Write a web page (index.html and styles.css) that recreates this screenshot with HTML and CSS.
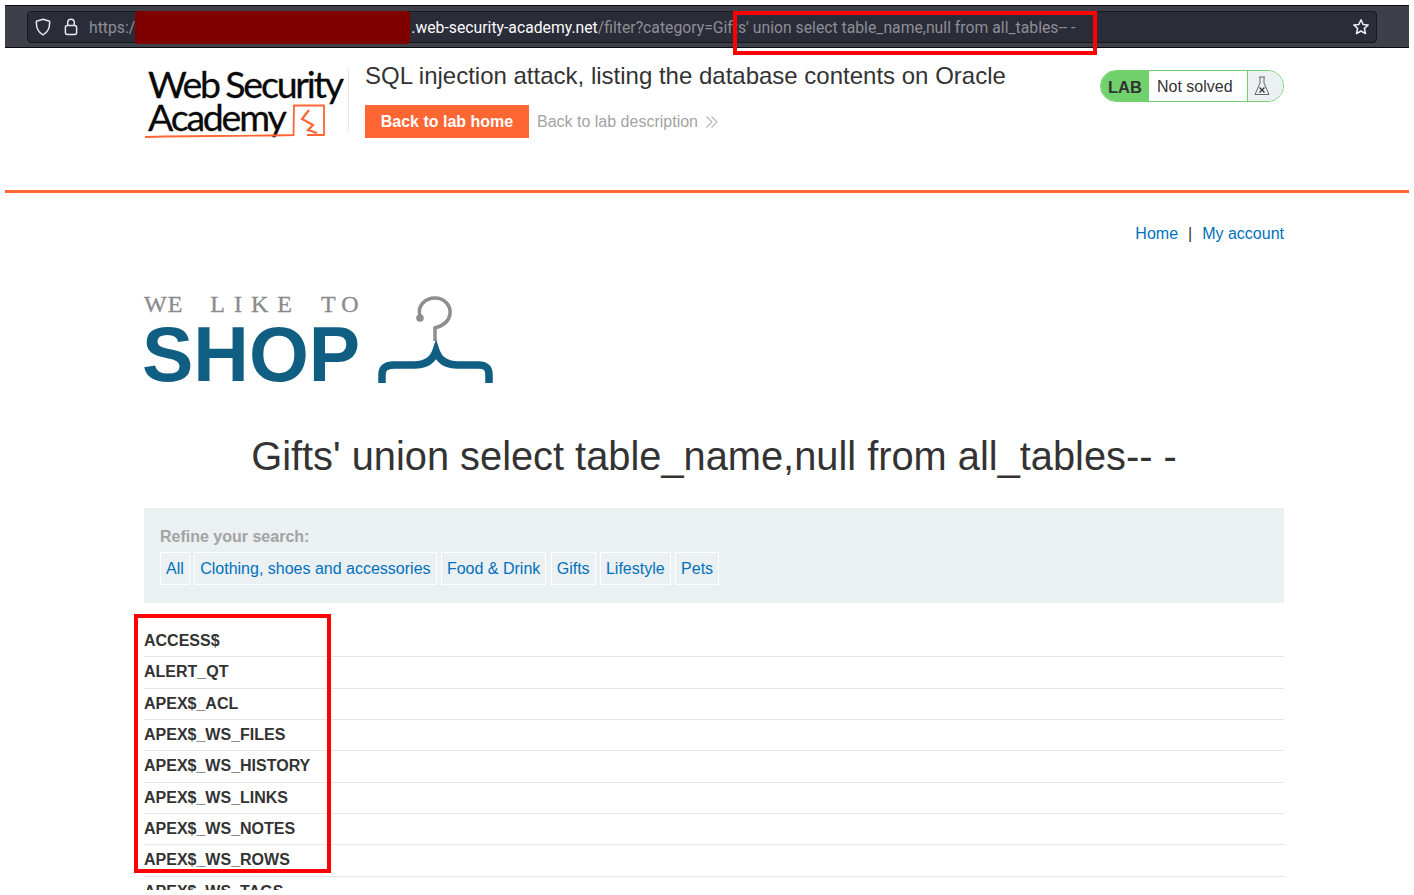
FILE: index.html
```html
<!DOCTYPE html>
<html lang="en">
<head>
<meta charset="utf-8">
<title>SQL injection attack</title>
<link rel="stylesheet" href="styles.css">
</head>
<body>
<div class="frame">
  <div class="toolbar">
    <div class="urlbar">
      <svg class="ico-shield" width="16" height="18" viewBox="0 0 16 18"><path d="M8 1.2 L14.6 3.2 C15 9.5 13 14.2 8 16.8 C3 14.2 1 9.5 1.4 3.2 Z" fill="none" stroke="#e8e8ec" stroke-width="1.5" stroke-linejoin="round"/></svg>
      <svg class="ico-lock" width="14" height="18" viewBox="0 0 14 18"><path d="M3.7 7.5V4.5a3.3 3.3 0 0 1 6.6 0V7.5" fill="none" stroke="#e8e8ec" stroke-width="1.5"/><rect x="1.4" y="7.6" width="11.2" height="8.8" rx="1.8" fill="none" stroke="#e8e8ec" stroke-width="1.5"/></svg>
      <span class="url"><span class="dim">https:/</span><span class="redact"></span><span class="host">.web-security-academy.net</span><span class="dim">/filter?category=Gifts' union select table_name,null from all_tables-- -</span></span>
      <svg class="ico-star" width="18" height="18" viewBox="0 0 18 18"><path d="M9 1.8 L11.1 6.4 L16.2 7 L12.4 10.4 L13.5 15.6 L9 13 L4.5 15.6 L5.6 10.4 L1.8 7 L6.9 6.4 Z" fill="none" stroke="#f0f0f4" stroke-width="1.5" stroke-linejoin="round"/></svg>
    </div>
  </div>

  <header class="academy">
    <div class="logo">
      <div class="logo-line">Web Security</div>
      <div class="logo-line">Academy</div>
      <svg class="logo-mark" width="186" height="72" viewBox="0 0 186 72"><path d="M1 70 C40 68.500 90 69.500 149.500 68 L150 38.500 H180 V68 H163" fill="none" stroke="#ff6633" stroke-width="1.800"/><path d="M165 43 L158 52 L169 58 L164 63 L173 66" fill="none" stroke="#ff6633" stroke-width="2.200"/></svg>
    </div>
    <div class="lab-head">
      <h2 class="lab-title">SQL injection attack, listing the database contents on Oracle</h2>
      <div class="lab-links">
        <a class="btn-home">Back to lab home</a>
        <a class="lab-desc">Back to lab description</a>
        <svg class="ico-chev" width="14" height="14" viewBox="0 0 14 14"><path d="M1.500 1.500 L7 7 L1.500 12.500 M6.500 1.500 L12 7 L6.500 12.500" fill="none" stroke="#b5b5b5" stroke-width="1.100"/></svg>
      </div>
    </div>
    <div class="status">
      <span class="status-lab">LAB</span>
      <span class="status-text">Not solved</span>
      <span class="status-icon">
        <svg width="18" height="20" viewBox="0 0 18 20"><path d="M6 1H12M7 1V7L2 18.500H16L11 7V1" fill="none" stroke="#666" stroke-width="1"/><path d="M6.500 11.500 L11.500 16.500 M11.500 11.500 L6.500 16.500" stroke="#333" stroke-width="1.200"/></svg>
      </span>
    </div>
  </header>

  <main class="page">
    <nav class="topnav"><a>Home</a><span class="sep">|</span><a>My account</a></nav>

    <div class="shop-logo">
      <div class="shop-words">
        <div class="shop-like"><span class="w1">WE</span> <span class="w2">LIKE</span> <span class="w3">TO</span></div>
        <div class="shop-name">SHOP</div>
      </div>
      <svg class="hanger" width="118" height="90" viewBox="0 0 118 90"><path d="M44 21 C41 11 49 3 59 3 C69 3 75 11 74 19 C73 27 66 31 59 33 V46" fill="none" stroke="#8e8e8e" stroke-width="3.500"/><circle cx="44" cy="23" r="3.800" fill="#8e8e8e"/><path d="M6 88 V80 C6 73 10 70 18 70 H38 C50 70 57 65 60 56 C63 65 70 70 82 70 H102 C110 70 113 73 113 80 V88" fill="none" stroke="#105e82" stroke-width="7.500"/></svg>
    </div>

    <h1 class="search-title">Gifts' union select table_name,null from all_tables-- -</h1>

    <section class="filters">
      <div class="filters-label">Refine your search:</div>
      <div class="chips">
        <a class="chip">All</a>
        <a class="chip">Clothing, shoes and accessories</a>
        <a class="chip">Food &amp; Drink</a>
        <a class="chip">Gifts</a>
        <a class="chip">Lifestyle</a>
        <a class="chip">Pets</a>
      </div>
    </section>

    <ul class="rows">
      <li>ACCESS$</li>
      <li>ALERT_QT</li>
      <li>APEX$_ACL</li>
      <li>APEX$_WS_FILES</li>
      <li>APEX$_WS_HISTORY</li>
      <li>APEX$_WS_LINKS</li>
      <li>APEX$_WS_NOTES</li>
      <li>APEX$_WS_ROWS</li>
      <li>APEX$_WS_TAGS</li>
    </ul>
  </main>

  <div class="mark mark-url"></div>
  <div class="mark mark-rows"></div>
</div>
</body>
</html>
```
FILE: styles.css
```css
* { box-sizing: border-box; }
html, body { margin: 0; background: #fff; }
body { height: 895px; overflow: hidden; font-family: "Liberation Sans", Arial, sans-serif; color: #333; }
a { text-decoration: none; }

.frame { position: relative; margin: 5px 5px 0; height: 885px; overflow: hidden; background: #fff; }

.toolbar {
  height: 43px; padding: 5px 32px 3px 22px;
  background: #3e4049; border-top: 1px solid #0c0c0d; border-bottom: 1px solid #0c0c0d;
}
.urlbar {
  display: flex; align-items: center; height: 32px; padding: 0 6px 0 7px;
  background: #2a2c38; border: 1px solid #17181e; border-radius: 4px;
}
.ico-shield { flex: none; }
.ico-lock { flex: none; margin-left: 13px; }
.url {
  flex: 1; margin-left: 11px; white-space: nowrap; height: 30px;
  font: 15.750px/30px "Roboto", sans-serif; color: #fff; display: flex; align-items: center;
}
.dim { color: #8e8f96; padding-top: 2px; }
.host { color: #fbfbfe; padding-top: 2px; }
.redact { display: inline-block; flex: none; width: 275px; height: 33px; margin: 0 1px 0 0; background: #7e0000; border-radius: 3px; }
.ico-star { flex: none; }

.academy { display: flex; height: 145px; border-bottom: 3px solid #ff6633; padding: 0 125px 0 139px; }
.logo { position: relative; flex: none; width: 205px; height: 88px; margin-top: 19px; padding-left: 4px; }
.logo::after { content: ""; position: absolute; right: 0; top: 2px; height: 62px; width: 1px; background: #e6e6e6; }
.logo-line { font: 400 37.500px/33px "Lato", sans-serif; letter-spacing: -2.200px; word-spacing: -1px; color: #0a0a0a; white-space: nowrap; -webkit-text-stroke: 0.3px #0a0a0a; }
.logo-mark { position: absolute; left: 0; top: 0; }
.lab-head { flex: 1; padding-left: 16px; }
.lab-title { margin: 14px 0 0; font: 400 24px/28px "Liberation Sans", sans-serif; color: #333; }
.lab-links { display: flex; align-items: center; margin-top: 15px; }
.btn-home { display: block; width: 164px; height: 33px; background: #ff6633; color: #fff; font-weight: 700; font-size: 16px; line-height: 33px; text-align: center; }
.lab-desc { margin-left: 8px; color: #a3a3a3; font-size: 16px; }
.ico-chev { margin-left: 7px; }

.status {
  flex: none; display: flex; align-self: flex-start; width: 184px; height: 32px; margin-top: 22px;
  border: 1px solid #70d16d; border-radius: 16px; overflow: hidden; font-size: 16px;
}
.status-lab { width: 48px; background: #70d16d; font-weight: 700; font-size: 16.500px; text-align: center; line-height: 32px; color: #333; }
.status-text { flex: 1; line-height: 32px; padding-left: 8px; background: #fff; }
.status-icon { width: 36px; background: #ebf0f2; border-left: 1px solid #70d16d; display: flex; align-items: center; padding-left: 5px; }

.page { padding: 0 125px 0 139px; }
.topnav { display: flex; justify-content: flex-end; margin-top: 31px; font-size: 16px; line-height: 20px; }
.topnav a { color: #0071bc; }
.sep { margin: 0 10px; color: #333; }

.shop-logo { display: flex; align-items: flex-start; height: 102px; margin-top: 50px; }
.shop-words { width: 232px; margin-top: -2px; }
.shop-like { display: flex; font: 400 24px/24px "Liberation Serif", serif; color: #8a8a8a; white-space: nowrap; -webkit-text-stroke: 0.3px #8a8a8a; }
.w1 { letter-spacing: 1px; }
.w2 { letter-spacing: 9px; margin-left: 27px; }
.w3 { letter-spacing: 6px; margin-left: 20px; }
.shop-name { font: 700 77px/66px "Liberation Sans", sans-serif; color: #105e82; margin: 5px 0 0 -2px; white-space: nowrap; }
.hanger { flex: none; margin-top: 1px; }

.search-title { margin: 37px 0 0; text-align: center; font: 400 39.800px/46px "Liberation Sans", sans-serif; color: #333; white-space: nowrap; }

.filters { margin-top: 29px; height: 95px; padding: 17px 16px 0; background: #ebf0f2; }
.filters-label { font-weight: 700; font-size: 16px; line-height: 24px; color: #a3a3a3; }
.chips { display: flex; gap: 4.400px; margin-top: 3px; }
.chip { height: 33px; padding: 0 5px; border: 1px solid #fff; color: #0071bc; font-size: 16px; line-height: 31px; white-space: nowrap; }

.rows { list-style: none; margin: 23px 0 0; padding: 0; }
.rows li { height: 31.330px; border-bottom: 1px solid #e6e6e6; font-weight: 700; font-size: 16px; line-height: 29px; color: #333; }

.mark { position: absolute; border: 4px solid #f00; }
.mark-url { left: 728px; top: 6px; width: 364px; height: 44px; }
.mark-rows { left: 129px; top: 609px; width: 197px; height: 259px; }
```
